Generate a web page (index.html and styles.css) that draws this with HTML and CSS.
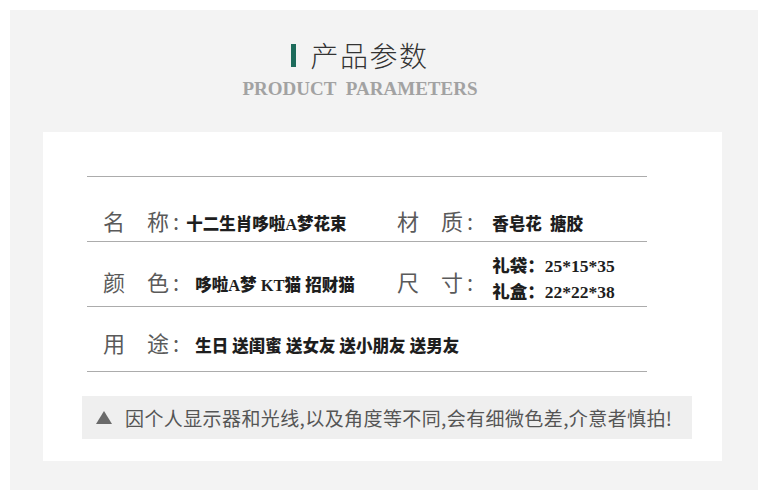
FILE: index.html
```html
<!DOCTYPE html>
<html lang="zh">
<head>
<meta charset="utf-8">
<link rel="stylesheet" href="styles.css">
</head>
<body>
<div class="panel">
  <div class="header">
    <div class="title"><span class="bar"></span><span class="title-text">产品参数</span></div>
    <div class="subtitle">PRODUCT PARAMETERS</div>
  </div>
  <div class="card">
    <div class="table">
      <div class="row row-1">
        <div class="cell cell-left">
          <span class="label">名&emsp;称<span class="colon">:</span></span>
          <span class="value value-near">十二生肖哆啦A梦花束</span>
        </div>
        <div class="cell">
          <span class="label">材&emsp;质<span class="colon">:</span></span>
          <span class="value value-right">香皂花&nbsp; 搪胶</span>
        </div>
      </div>
      <div class="row row-2">
        <div class="cell cell-left">
          <span class="label">颜&emsp;色<span class="colon">:</span></span>
          <span class="value">哆啦A梦 KT猫 招财猫</span>
        </div>
        <div class="cell cell-center">
          <span class="label">尺&emsp;寸<span class="colon">:</span></span>
          <span class="value value-right value-stack">
            <span>礼袋：25*15*35</span>
            <span>礼盒：22*22*38</span>
          </span>
        </div>
      </div>
      <div class="row row-3">
        <div class="cell cell-left">
          <span class="label">用&emsp;途<span class="colon">:</span></span>
          <span class="value">生日 送闺蜜 送女友 送小朋友 送男友</span>
        </div>
      </div>
    </div>
    <div class="note">
      <svg class="tri" width="16" height="13" viewBox="0 0 16 13"><polygon points="8,0 16,13 0,13" fill="#6a6a6a"/></svg>
      <span class="note-text">因个人显示器和光线,以及角度等不同,会有细微色差,介意者慎拍!</span>
    </div>
  </div>
</div>
</body>
</html>
```

FILE: styles.css
```css
html, body {
  margin: 0;
  padding: 0;
  background: #ffffff;
}
body {
  font-family: "Noto Sans CJK SC", "Noto Sans", sans-serif;
}
.panel {
  margin: 10px 11px 0 10px;
  height: 480px;
  background: #f3f3f3;
  padding-top: 31px;
  box-sizing: border-box;
}
.header {
  display: flex;
  flex-direction: column;
  align-items: center;
  padding-right: 48px;
}
.title {
  display: flex;
  align-items: center;
  height: 28px;
}
.bar {
  width: 5px;
  height: 23px;
  background: #1d6b5b;
  margin-right: 14px;
}
.title-text {
  font-size: 28px;
  line-height: 28px;
  font-weight: 300;
  color: #333333;
  letter-spacing: 1.5px;
}
.subtitle {
  margin-top: 10px;
  font-family: "Liberation Serif", serif;
  font-weight: bold;
  font-size: 19px;
  line-height: 19px;
  color: #a2a2a2;
  word-spacing: 5px;
}
.card {
  margin: 34px 0 0 33px;
  width: 679px;
  height: 329px;
  background: #ffffff;
  padding-top: 44px;
  box-sizing: border-box;
}
.table {
  width: 560px;
  margin-left: 44px;
}
.row {
  display: grid;
  grid-template-columns: 310px 1fr;
  align-items: center;
  height: 65px;
  border-top: 1px solid #acacac;
  box-sizing: border-box;
}
.row-1 { padding-top: 22px; }
.row-2 { padding-top: 14px; }
.row-3 {
  padding-top: 6px;
  height: 66px;
  border-bottom: 1px solid #acacac;
}
.cell {
  display: flex;
  align-items: baseline;
}
.cell-center {
  align-items: center;
}
.cell-left {
  padding-left: 16px;
}
.label {
  font-size: 22px;
  line-height: 28px;
  font-weight: 400;
  color: #5a5a5a;
  white-space: nowrap;
}
.colon {
  margin-left: 4px;
}
.value {
  margin-left: 16px;
  font-family: "Liberation Serif", "Noto Sans CJK SC", serif;
  font-weight: 900;
  font-size: 16.5px;
  line-height: 20px;
  color: #1e1e1e;
  white-space: nowrap;
}
.value-near {
  margin-left: 7px;
}
.value-right {
  margin-left: 19px;
}
.value-stack {
  display: flex;
  flex-direction: column;
  gap: 6px;
  margin-top: -4px;
  font-size: 17.5px;
}
.note {
  margin: 24px 0 0 39px;
  width: 610px;
  height: 43px;
  background: #efefef;
  display: flex;
  align-items: center;
  padding-left: 14px;
  box-sizing: border-box;
}
.tri {
  flex: none;
  margin-right: 13px;
}
.note-text {
  font-size: 19px;
  line-height: 24px;
  color: #555555;
  letter-spacing: 0.4px;
  white-space: nowrap;
}
```
